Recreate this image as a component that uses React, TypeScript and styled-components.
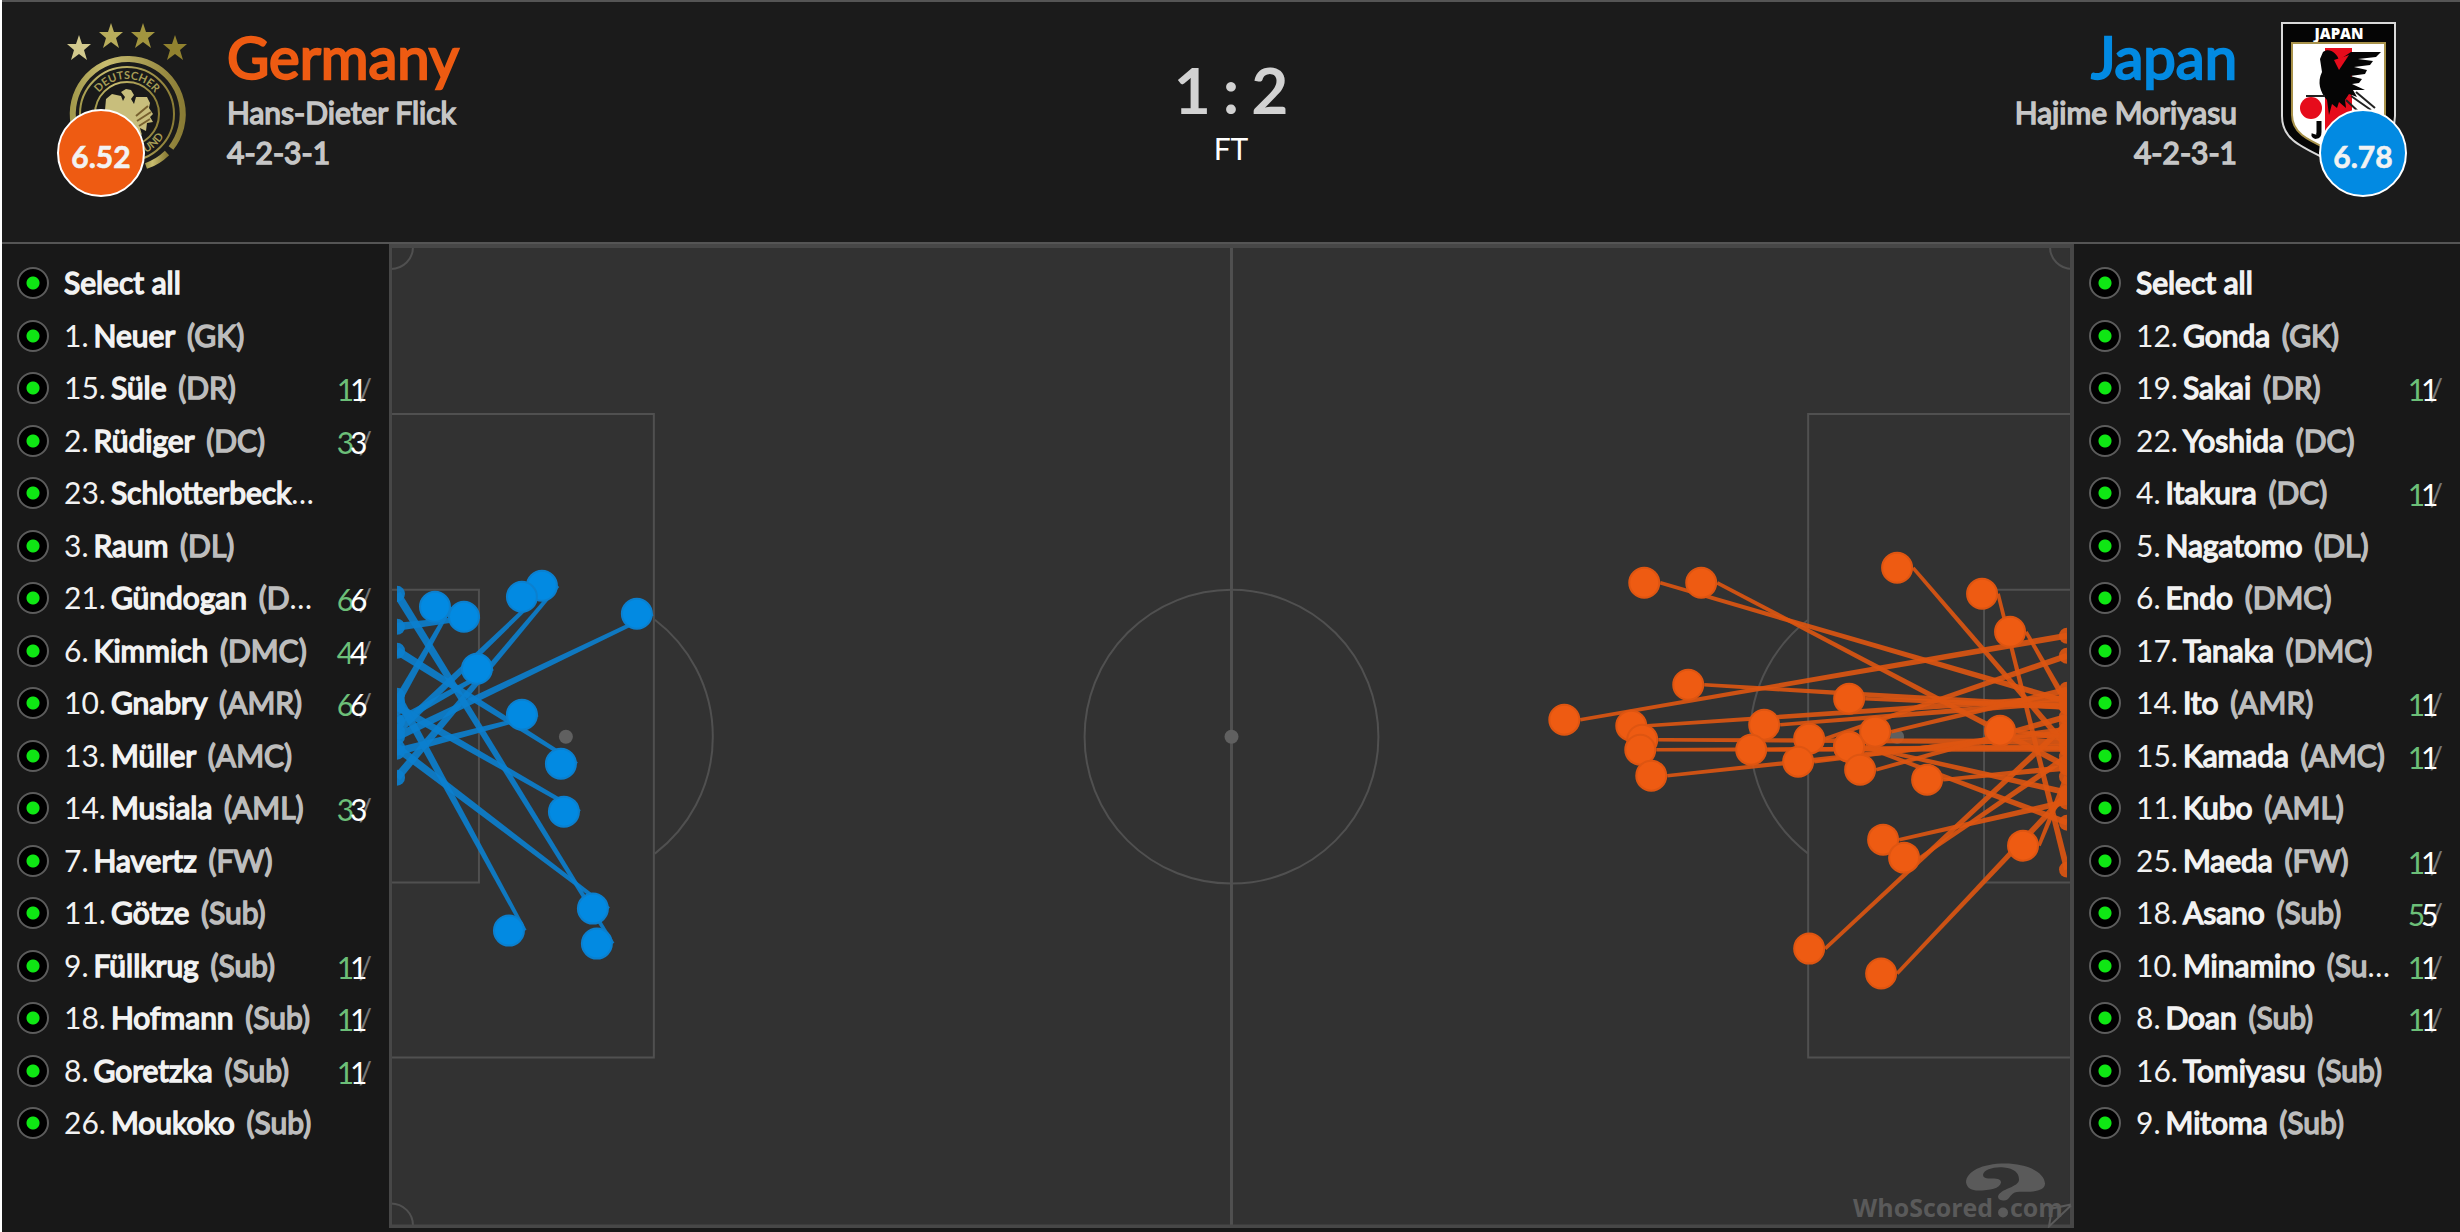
import React, { useState } from 'react';
import styled, { createGlobalStyle } from 'styled-components';

const ORANGE = '#ee5b12';
const BLUE = '#028ae2';

const GlobalStyle = createGlobalStyle`
  *, *::before, *::after { box-sizing: border-box; }
  html { background: #181818; }
  body {
    margin: 0;
    background: #181818;
    color: #f2f2f2;
    font: 30px/40px Lato, "Liberation Sans", sans-serif;
  }
`;

const Page = styled.div`
  border-left: 2px solid #fff;
  min-height: 100vh;
`;

const Header = styled.header`
  display: grid;
  grid-template-columns: 1fr auto 1fr;
  min-height: 244px;
  padding: 18px 64px 0;
  background: #1b1b1b;
  border-top: 2px solid #555;
  border-bottom: 2px solid #555;
`;

const Team = styled.section<{ $away?: boolean }>`
  display: flex;
  flex-direction: ${(p) => (p.$away ? 'row-reverse' : 'row')};
  align-items: flex-start;
  gap: ${(p) => (p.$away ? 44 : 38)}px;
  text-align: ${(p) => (p.$away ? 'right' : 'left')};
`;

const Crest = styled.div`
  position: relative;
  line-height: 0;
`;

const Rating = styled.span<{ $color: string; $away?: boolean }>`
  position: absolute;
  top: 89px;
  ${(p) => (p.$away ? 'right: -11px' : 'left: -9px')};
  display: grid;
  place-items: center;
  width: 88px;
  height: 88px;
  padding-top: 6px;
  border: 2px solid #fff;
  border-radius: 50%;
  background: ${(p) => p.$color};
  color: #f2f2f2;
  font-size: 30px;
  font-weight: 700;
  line-height: 40px;
  -webkit-text-stroke: 0.02em currentColor;
`;

const TeamName = styled.h1<{ $color: string }>`
  margin: 2px 0 0;
  color: ${(p) => p.$color};
  font-size: 58px;
  font-weight: 400;
  line-height: 70px;
  -webkit-text-stroke: 0.04em currentColor;
`;

const TeamMeta = styled.p`
  margin: 0;
  color: #c6c6c6;
  -webkit-text-stroke: 0.05em currentColor;
`;

const Result = styled.section`
  padding-top: 32px;
  text-align: center;
`;

const Score = styled.div`
  display: flex;
  justify-content: center;
  gap: 12px;
  color: #d2d2d2;
  font-size: 64px;
  font-weight: 700;
  line-height: 76px;
`;

const Status = styled.div`
  color: #fff;
`;

const Main = styled.main`
  display: grid;
  grid-template-columns: 387px minmax(0, 1fr) 386px;
`;

const Roster = styled.fieldset`
  display: flex;
  flex-direction: column;
  justify-content: space-between;
  min-width: 0;
  margin: 0;
  padding: 19px 17px 85px 15px;
  border: 0;
  background: #181818;
`;

const Row = styled.label`
  display: flex;
  align-items: center;
  height: 40px;
`;

const Toggle = styled.input`
  appearance: none;
  flex: none;
  width: 32px;
  height: 32px;
  margin: 0 15px 0 0;
  border: 2px solid #5c5c5c;
  border-radius: 50%;
  background: #000;
  &:checked {
    background: radial-gradient(circle, #0fe614 6px, #000 7px);
  }
`;

const Label = styled.span`
  width: 254px;
  padding-bottom: 2px;
  overflow: hidden;
  white-space: nowrap;
  text-overflow: ellipsis;
`;

const Name = styled.b`
  margin: 0 4px 0 5px;
  font-weight: 400;
  -webkit-text-stroke: 0.05em currentColor;
`;

const SelectAll = styled.b`
  font-weight: 400;
  -webkit-text-stroke: 0.05em currentColor;
`;

const Position = styled.span`
  color: #bdbdbd;
  -webkit-text-stroke: 0.05em currentColor;
`;

const Tally = styled.span`
  display: flex;
  margin-left: auto;
  padding-top: 2px;
`;

const OnTarget = styled.span`
  color: #6cbf78;
`;

const Total = styled.span`
  z-index: 1;
  margin-left: -4px;
  color: #fff;
`;

const Slash = styled.span`
  margin-left: -9px;
  color: #777;
`;

const PitchSvg = styled.svg`
  display: block;
  width: 100%;
  height: auto;
`;

type Player = [number, string, string, number?];

const germany: Player[] = [
  [1, 'Neuer', 'GK'], [15, 'Süle', 'DR', 1], [2, 'Rüdiger', 'DC', 3],
  [23, 'Schlotterbeck', 'DC'], [3, 'Raum', 'DL'], [21, 'Gündogan', 'DMC', 6],
  [6, 'Kimmich', 'DMC', 4], [10, 'Gnabry', 'AMR', 6], [13, 'Müller', 'AMC'],
  [14, 'Musiala', 'AML', 3], [7, 'Havertz', 'FW'], [11, 'Götze', 'Sub'],
  [9, 'Füllkrug', 'Sub', 1], [18, 'Hofmann', 'Sub', 1], [8, 'Goretzka', 'Sub', 1],
  [26, 'Moukoko', 'Sub'],
];

const japan: Player[] = [
  [12, 'Gonda', 'GK'], [19, 'Sakai', 'DR', 1], [22, 'Yoshida', 'DC'],
  [4, 'Itakura', 'DC', 1], [5, 'Nagatomo', 'DL'], [6, 'Endo', 'DMC'],
  [17, 'Tanaka', 'DMC'], [14, 'Ito', 'AMR', 1], [15, 'Kamada', 'AMC', 1],
  [11, 'Kubo', 'AML'], [25, 'Maeda', 'FW', 1], [18, 'Asano', 'Sub', 5],
  [10, 'Minamino', 'Sub', 1], [8, 'Doan', 'Sub', 1], [16, 'Tomiyasu', 'Sub'],
  [9, 'Mitoma', 'Sub'],
];

function TeamRoster({ name, players }: { name: string; players: Player[] }) {
  const [on, setOn] = useState<boolean[]>(players.map(() => true));
  const all = on.every(Boolean);
  return (
    <Roster aria-label={name}>
      <Row>
        <Toggle type="checkbox" checked={all} onChange={() => setOn(on.map(() => !all))} />
        <Label><SelectAll>Select all</SelectAll></Label>
      </Row>
      {players.map(([no, surname, pos, shots], i) => (
        <Row key={no}>
          <Toggle
            type="checkbox"
            checked={on[i]}
            onChange={() => setOn(on.map((v, j) => (j === i ? !v : v)))}
          />
          <Label>
            {no}.<Name>{surname}</Name> <Position>({pos})</Position>
          </Label>
          {shots && (
            <Tally>
              <OnTarget>{shots}</OnTarget>
              <Total>{shots}</Total>
              <Slash>/</Slash>
            </Tally>
          )}
        </Row>
      ))}
    </Roster>
  );
}

// [x, y, end y]; x and y are the shot's origin on the 1686 x 985 pitch,
// the end y is where it crosses the goal line.
type Shot = [number, number, number];

const japanShots: Shot[] = [
  [46, 363, 458], [75, 373, 383], [153, 342, 534], [133, 353, 488],
  [248, 370, 493], [88, 425, 478], [133, 471, 508], [172, 520, 407],
  [175, 568, 463], [204, 665, 504], [208, 700, 350], [120, 687, 452],
];

const germanyShots: Shot[] = [
  [1256, 339, 458], [1313, 339, 523], [1300, 441, 463], [1176, 476, 392],
  [1243, 482, 454], [1254, 496, 498], [1252, 506, 505], [1263, 532, 489],
  [1376, 481, 458], [1363, 506, 503], [1421, 495, 412], [1410, 518, 486],
  [1421, 705, 480], [1509, 324, 503], [1594, 350, 626], [1622, 388, 460],
  [1461, 455, 463], [1487, 488, 446], [1461, 503, 549], [1461, 503, 579],
  [1472, 526, 473], [1612, 487, 495], [1539, 536, 524], [1495, 596, 558],
  [1516, 614, 513], [1635, 602, 533], [1493, 730, 550],
];

interface ShotsProps {
  shots: Shot[];
  color: string;
  trail: string;
  goalX: number;
  spread: number;
}

function Shots({ shots, color, trail, goalX, spread }: ShotsProps) {
  return (
    <g>
      {shots.map(([x, y, ey], i) => {
        const sx = x + 16;
        const len = Math.hypot(goalX - sx, ey - y);
        const nx = -(ey - y) / len;
        const ny = (goalX - sx) / len;
        const a = 1.8;
        const points = [
          [sx + nx * a, y + ny * a], [goalX + nx * spread, ey + ny * spread],
          [goalX - nx * spread, ey - ny * spread], [sx - nx * a, y - ny * a],
        ].map((p) => p.join(',')).join(' ');
        return <polygon key={i} points={points} fill={trail} opacity="0.9" />;
      })}
      {shots.map(([, , ey], i) => <circle key={i} cx={goalX} cy={ey} r="8" fill={trail} opacity="0.9" />)}
      {shots.map(([x, y], i) => (
        <circle key={i} cx={x} cy={y} r="15" fill={color} stroke={trail} strokeWidth="2" />
      ))}
    </g>
  );
}

function Pitch() {
  return (
    <PitchSvg viewBox="0 0 1686 985" role="img" aria-label="Shot map">
      <defs>
        <clipPath id="goals"><rect x="8" y="0" width="1671" height="985" /></clipPath>
      </defs>
      <rect width="1686" height="985" fill="#323232" />
      <g fill="none" stroke="#505050" strokeWidth="2">
        <path d="M2 170H265V814H2M2 346H90V639H2M1684 170H1420V814H1684M1684 346H1596V639H1684" />
        <path d="M843 3V982" strokeWidth="3" />
        <circle cx="843" cy="493" r="147" />
        <path d="M266 376A147 147 0 0 1 266 610M1420 376A147 147 0 0 0 1420 610" />
        <path d="M24 3A22 22 0 0 1 2 25M1662 3A22 22 0 0 0 1684 25M2 960A22 22 0 0 1 24 982" />
      </g>
      <path d="M0 2H1686M1 0V985M1684 0V985M0 983H1686" stroke="#474747" strokeWidth="4" fill="none" />
      <g fill="#606060">
        <circle cx="843" cy="493" r="7" />
        <circle cx="177" cy="493" r="7" />
        <circle cx="1509" cy="493" r="7" />
      </g>
      <g fill="#5a5a5a">
        <text x="1465" y="974" fontFamily="Open Sans, sans-serif" fontWeight="700" fontSize="25">WhoScored</text>
        <circle cx="1615" cy="969" r="5" />
        <text x="1622" y="974" fontFamily="Open Sans, sans-serif" fontWeight="700" fontSize="25">com</text>
        <path d="M1578 939C1579 945 1584 947 1590 947C1602 947 1612 945 1613 939C1613 935 1608 935 1602 935C1597 935 1595 934 1595 931C1596 926 1606 923 1616 924C1626 925 1631 929 1631 936C1631 944 1612 945 1610 953C1610 956 1613 957 1616 957C1621 957 1621 953 1625 950C1629 947 1638 949 1645 948C1652 947 1657 945 1657 940C1656 928 1638 920 1617 920C1594 920 1578 928 1578 939Z" />
        <path d="M1683 961L1664 965L1661 983L1683 962" fill="none" stroke="#5a5a5a" strokeWidth="2" />
      </g>
      <g clipPath="url(#goals)">
        <Shots shots={japanShots} color={BLUE} trail="#0b80cf" goalX={8} spread={4} />
        <Shots shots={germanyShots} color={ORANGE} trail="#de5511" goalX={1679} spread={3} />
      </g>
    </PitchSvg>
  );
}

const STAR = 'M0 -13L3 -4H12L5 2L8 12L0 6L-8 12L-5 2L-12 -4H-3Z';

function GermanyCrest() {
  return (
    <svg width="123" height="156" viewBox="66 20 123 156" role="img" aria-label="Germany">
      <defs>
        <linearGradient id="gold" x1="0" x2="1">
          <stop offset="0" stopColor="#a39a4c" />
          <stop offset="0.3" stopColor="#c9bd70" />
          <stop offset="1" stopColor="#8a7c35" />
        </linearGradient>
        <path id="arcTop" d="M92 114A35 35 0 0 1 162 114" />
        <path id="arcBottom" d="M84 114A43 43 0 0 0 170 114" />
      </defs>
      <path d={STAR} transform="translate(79 48)" fill="#d2c98d" />
      <path d={STAR} transform="translate(111 36)" fill="#b9ad5c" />
      <path d={STAR} transform="translate(143 36)" fill="#a2953f" />
      <path d={STAR} transform="translate(175 48)" fill="#91822f" />
      <circle cx="127" cy="114" r="48" fill="#191919" />
      <g fill="none" stroke="url(#gold)">
        <path d="M171 148A55 55 0 1 0 127 169" strokeWidth="6" />
        <path d="M167 153A55 55 0 0 1 146 166" strokeWidth="6" />
        <circle cx="127" cy="114" r="47" strokeWidth="2" />
        <circle cx="127" cy="114" r="32" strokeWidth="2" />
      </g>
      <g fill="#a79d55" fontFamily="Lato, sans-serif" fontWeight="700" fontSize="11">
        <text><textPath href="#arcTop" startOffset="50%" textAnchor="middle">DEUTSCHER</textPath></text>
        <text><textPath href="#arcBottom" startOffset="50%" textAnchor="middle">FUSSBALL-BUND</textPath></text>
      </g>
      <path d="M106 99L112 94L121 96L123 101L125 97L121 92L126 89L131 90L134 95L131 99L134 104L136 97L147 97L150 103L149 108L153 114L150 117L153 122L147 123L146 131L140 128L142 135L134 130L127 138L120 128L109 126L110 114L105 110Z" fill="#c8be7c" />
      <path d="M136 116L148 106M137 121L151 112M139 126L150 119" stroke="#77602f" strokeWidth="2" fill="none" />
    </svg>
  );
}

function JapanCrest() {
  return (
    <svg width="115" height="146" viewBox="0 0 115 146" role="img" aria-label="Japan">
      <path d="M1 3H114V96C114 122 90 128 57 145C24 128 1 122 1 96Z" fill="#050505" stroke="#d9d9d9" strokeWidth="2" />
      <text x="58" y="19" fill="#fff" fontFamily="Open Sans, sans-serif" fontWeight="800" fontSize="15" textAnchor="middle">JAPAN</text>
      <path d="M11 23H104V95C104 115 84 121 57 134C30 121 11 115 11 95Z" fill="#fff" stroke="#a8924a" strokeWidth="2" />
      <path d="M44 28H71V108L57 119L44 112Z" fill="#e60b1b" />
      <circle cx="30" cy="88" r="11" fill="#e60b1b" />
      <path d="M42 32C48 27 56 33 58 40L70 32H100L95 37L77 39L92 41L89 45L73 47L86 50L84 54L69 56L81 59L78 63L71 64L84 70L72 70L76 77L68 74L64 80L65 88L58 82L56 88L51 84L48 95L46 80C39 72 36 62 41 52L39 39Z" fill="#050505" />
      <path d="M53 40L68 35L58 50Z" fill="#e60b1b" />
      <path d="M25 76H44M70 76L90 90M75 72L94 88M65 80L80 94" stroke="#222" strokeWidth="2" />
      <path d="M38 101V112C38 118 32 117 33 114" fill="none" stroke="#050505" strokeWidth="5" />
    </svg>
  );
}

export default function App() {
  return (
    <Page>
      <GlobalStyle />
      <Header>
        <Team>
          <Crest>
            <GermanyCrest />
            <Rating $color={ORANGE}>6.52</Rating>
          </Crest>
          <div>
            <TeamName $color={ORANGE}>Germany</TeamName>
            <TeamMeta>Hans-Dieter Flick</TeamMeta>
            <TeamMeta>4-2-3-1</TeamMeta>
          </div>
        </Team>
        <Result>
          <Score><span>1</span><span>:</span><span>2</span></Score>
          <Status>FT</Status>
        </Result>
        <Team $away>
          <Crest>
            <JapanCrest />
            <Rating $color={BLUE} $away>6.78</Rating>
          </Crest>
          <div>
            <TeamName $color={BLUE}>Japan</TeamName>
            <TeamMeta>Hajime Moriyasu</TeamMeta>
            <TeamMeta>4-2-3-1</TeamMeta>
          </div>
        </Team>
      </Header>
      <Main>
        <TeamRoster name="Germany players" players={germany} />
        <Pitch />
        <TeamRoster name="Japan players" players={japan} />
      </Main>
    </Page>
  );
}
